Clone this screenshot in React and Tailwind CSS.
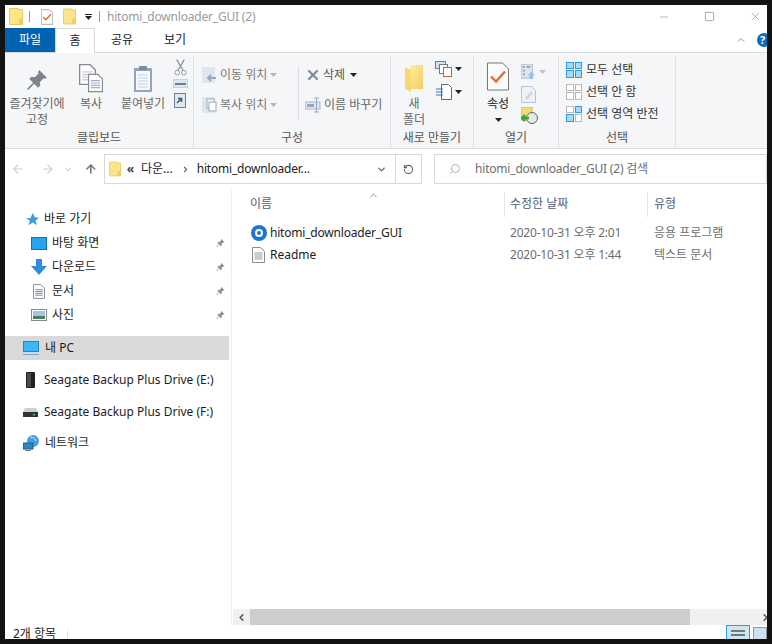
import React from 'react';
import { ArrowLeft, ArrowRight, ArrowUp, ChevronDown, ChevronUp, ChevronLeft, ChevronRight, RotateCw, Search, X, Minus, Square } from 'lucide-react';

const Folder = ({ className = 'w-[14px] h-[17px]' }) => (
  <svg viewBox="0 0 14 17" className={className}>
    <path d="M0.5 0.5h9v1h4v15h-13z" fill="#fde38a" stroke="#e9c95a" />
    <path d="M10 11h3.5v5.5h-3.5z" fill="#f3cf5c" />
  </svg>
);

const Pin = ({ className = 'w-[9px] h-[10px]', color = '#8a9099' }) => (
  <svg viewBox="0 0 20 20" className={className}>
    <path d="M12 1l7 7-2 1-1-.5-3.5 3.5.5 3-2 2-3.5-3.5L2 19l-1-1 5.500-5.500L3 9l2-2 3 .5L11.500 4 11 3z" fill={color} />
  </svg>
);

const Caret = ({ color = '#222' }) => (
  <svg viewBox="0 0 7 4" className="w-[7px] h-[4px] shrink-0"><path d="M0 0h7L3.500 4z" fill={color} /></svg>
);

const CheckDoc = ({ className }) => (
  <svg viewBox="0 0 22 28" className={className}>
    <path d="M.5.5h15l6 6v21H.5z" fill="#fbfbfb" stroke="#777" />
    <path d="M4 14l5 5 9-10" fill="none" stroke="#ea6a2a" strokeWidth="2.400" />
  </svg>
);

const Doc = ({ className, lines = '#8f9bb0' }) => (
  <svg viewBox="0 0 13 16" className={className}>
    <path d="M.5.5h8l4 4v11H.5z" fill="#fff" stroke="#8a8a8a" />
    <path d="M2.500 6h8M2.500 8h8M2.500 10h8M2.500 12h8" stroke={lines} />
  </svg>
);

const GridIcon = ({ cells, stroke }) => (
  <div className="grid grid-cols-2 gap-[1px] w-[16px] h-[16px] shrink-0">
    {cells.map((on, i) => (
      <span key={i} className={on ? 'border border-[#2f9ae0] bg-[#a9d8f8]' : 'border border-[#b9b9b9] bg-white'} />
    ))}
  </div>
);

const Sep = () => <div className="w-px bg-[#dcdde0]" />;

function RibbonGroup({ width, label, children }) {
  return (
    <div className="flex flex-col h-full border-r border-[#dfe0e3] pb-[2px]" style={{ width }}>
      <div className="flex-1 flex min-h-0">{children}</div>
      <div className="text-center text-[#555] leading-[16px] h-[16px]">{label}</div>
    </div>
  );
}

function BigButton({ icon, label, width, className = '' }) {
  return (
    <div className={`flex flex-col items-center shrink-0 ${className}`} style={{ width }}>
      <div className="h-[37px] flex items-end justify-center">{icon}</div>
      <div className="text-center leading-[16px] mt-[3px] text-[#666]">{label}</div>
    </div>
  );
}

const Row = ({ icon, label, pinned }) => (
  <div className="h-[24px] flex items-center pl-[26px] pr-[6px]">
    <div className="w-[16px] h-[16px] flex items-center justify-center shrink-0">{icon}</div>
    <span className="ml-[5px] text-[#1c1c1c] flex-1">{label}</span>
    {pinned && <Pin />}
  </div>
);

const Row2 = ({ icon, label, className = '' }) => (
  <div className={`h-[24px] flex items-center pl-[17px] ${className}`}>
    <div className="w-[17px] h-[16px] flex items-center justify-center shrink-0">{icon}</div>
    <span className="ml-[5px] text-[#1c1c1c] whitespace-nowrap">{label}</span>
  </div>
);

export default function App() {
  return (
    <div
      className="w-[772px] h-[644px] bg-[#131313] pt-[5px] pl-[5px] pr-[5px] pb-[5px] overflow-hidden text-[12px]"
      style={{ fontFamily: '"Noto Sans", "Noto Sans CJK KR", sans-serif' }}
    >
      <div className="w-[762px] h-[634px] bg-white flex flex-col overflow-hidden">
        {/* title bar */}
        <div className="h-[23px] flex items-center shrink-0 relative">
          <div className="ml-[4px]"><Folder /></div>
          <div className="ml-[6px] w-px h-[11px] bg-[#999]" />
          <CheckDoc className="ml-[11px] w-[12px] h-[16px]" />
          <div className="ml-[10px]"><Folder className="w-[13px] h-[17px]" /></div>
          <div className="ml-[9px] flex flex-col items-center gap-[1px]">
            <span className="w-[7px] h-px bg-[#222]" />
            <Caret />
          </div>
          <div className="ml-[7px] w-px h-[11px] bg-[#999]" />
          <span className="ml-[7px] text-[#9a9a9a] tracking-[-0.2px]">hitomi_downloader_GUI (2)</span>
          <div className="ml-auto flex items-center">
            <Minus className="w-[12px] h-[12px] mr-[34px] text-[#777]" strokeWidth={1} />
            <Square className="w-[11px] h-[11px] mr-[34px] text-[#777]" strokeWidth={1.400} />
            <X className="w-[13px] h-[13px] mr-[5px] text-[#777]" strokeWidth={1} />
          </div>
        </div>

        {/* tabs */}
        <div className="h-[25px] flex shrink-0 border-b border-[#dadbdc] relative">
          <div className="w-[50px] h-[24px] bg-[#0063b1] text-white text-center leading-[23px]">파일</div>
          <div className="w-[40px] h-[25px] bg-[#f5f6f7] border-x border-t border-[#dadbdc] text-center leading-[23px] text-[#222] bg-white">홈</div>
          <div className="ml-[15px] w-[24px] text-center leading-[23px] text-[#222]">공유</div>
          <div className="ml-[29px] w-[24px] text-center leading-[23px] text-[#222]">보기</div>
          <div className="ml-auto flex items-center h-[24px]">
            <ChevronUp className="w-[12px] h-[12px] text-[#999] mr-[10px]" />
            <div className="w-[14px] h-[14px] rounded-full bg-[#0a6cc4] text-white text-[11px] font-bold leading-[14px] pl-[3px] -mr-[4px]">?</div>
          </div>
        </div>

        {/* ribbon */}
        <div className="h-[96px] bg-[#f5f6f7] border-b border-[#dadbdc] flex shrink-0 pt-[3px]">
          <RibbonGroup width={189} label="클립보드">
            <BigButton width={62} className="pl-[2px]" label={<>즐겨찾기에<br />고정</>} icon={<Pin className="w-[22px] h-[22px] mb-[2px]" color="#7d838c" />} />
            <BigButton width={40} className="ml-[4px]" label="복사" icon={
              <div className="relative w-[24px] h-[30px]">
                <Doc className="w-[17px] h-[23px]" lines="#c3cfe0" />
                <Doc className="absolute right-0 bottom-0 w-[15px] h-[20px]" lines="#9cb0cc" />
              </div>
            } />
            <BigButton width={56} className="ml-[4px]" label="붙여넣기" icon={
              <svg viewBox="0 0 20 28" className="w-[20px] h-[28px]">
                <rect x="1" y="3" width="18" height="24" rx="1" fill="#8fa5c0" />
                <rect x="3" y="6" width="14" height="19" fill="#f6f8fb" />
                <path d="M5 10h10M5 13h10M5 16h10M5 19h10M5 22h10" stroke="#c6d2e2" />
                <rect x="6" y="1" width="8" height="4" fill="#7e8ea5" />
              </svg>
            } />
            <div className="flex flex-col items-center ml-[1px] w-[16px] pt-[3px] gap-[3px]">
              <svg viewBox="0 0 14 17" className="w-[13px] h-[17px]"><path d="M3 0l7 12M11 0L4 12" stroke="#8a97a8" strokeWidth="1.500" /><circle cx="3.500" cy="14" r="2.500" fill="none" stroke="#8a97a8" /><circle cx="10.500" cy="14" r="2.500" fill="none" stroke="#8a97a8" /></svg>
              <div className="w-[15px] h-[9px] bg-[#dde5f0] border border-[#c6d2e2] flex items-center justify-center"><span className="w-[11px] h-[2px] bg-[#6c7c93]" /></div>
              <svg viewBox="0 0 12 16" className="w-[12px] h-[16px] mt-[1px]"><rect x=".5" y="1.500" width="11" height="14" fill="#dfe7f1" stroke="#6e7f96" /><path d="M3 11l4-4M4 6.500h3.500V10" fill="none" stroke="#44566e" strokeWidth="1.500" /></svg>
            </div>
          </RibbonGroup>

          <RibbonGroup width={197} label="구성">
            <div className="w-[96px] ml-[8px] pt-[8px] flex flex-col gap-[9px] text-[#777]">
              <div className="flex items-center h-[21px] gap-[3px]">
                <svg viewBox="0 0 15 16" className="w-[15px] h-[16px] shrink-0"><rect width="13" height="16" fill="#dfe6ef" /><path d="M14 11H7M9 8l-3 3 3 3" fill="none" stroke="#98a8bc" strokeWidth="2" /></svg>
                <span className="whitespace-nowrap">이동 위치</span>
                <Caret color="#b5b5b5" />
              </div>
              <div className="flex items-center h-[21px] gap-[3px]">
                <svg viewBox="0 0 15 16" className="w-[15px] h-[16px] shrink-0"><rect width="13" height="16" fill="#dfe6ef" /><rect x="5" y="2" width="7" height="9" fill="#fff" stroke="#98a8bc" /><rect x="7" y="5" width="7" height="9" fill="#fff" stroke="#98a8bc" /></svg>
                <span className="whitespace-nowrap">복사 위치</span>
                <Caret color="#b5b5b5" />
              </div>
            </div>
            <div className="w-px h-[55px] bg-[#dcdde0] mt-[10px]" />
            <div className="ml-[6px] pt-[8px] flex flex-col gap-[9px] text-[#666]">
              <div className="flex items-center h-[21px] gap-[2px]">
                <X className="w-[16px] h-[16px] text-[#7f8ea3] shrink-0" strokeWidth={3.500} />
                <span className="whitespace-nowrap text-[#555]">삭제</span>
                <span className="ml-[3px]"><Caret /></span>
              </div>
              <div className="flex items-center h-[21px] gap-[3px]">
                <svg viewBox="0 0 16 16" className="w-[16px] h-[16px] shrink-0"><rect x="0" y="5" width="15" height="7" fill="#dfe6ef" stroke="#a8b5c6" /><rect x="2" y="7" width="7" height="3" fill="#98a8bc" /><path d="M9 1h5M11.500 1v14M9 15h5" stroke="#98a8bc" /></svg>
                <span className="whitespace-nowrap">이름 바꾸기</span>
              </div>
            </div>
          </RibbonGroup>

          <RibbonGroup width={83} label="새로 만들기">
            <BigButton width={42} className="ml-[2px]" label={<>새<br />폴더</>} icon={
              <svg viewBox="0 0 18 28" className="w-[18px] h-[28px] mb-[1px]">
                <defs><linearGradient id="nf" x1="0" y1="0" x2="1" y2="1"><stop offset="0" stopColor="#fdeea8" /><stop offset="1" stopColor="#f4cc5e" /></linearGradient></defs>
                <path d="M5 1h13v24H5z" fill="url(#nf)" />
                <path d="M0 3l6 3v22l-6-3z" fill="#f8d775" />
              </svg>
            } />
            <div className="flex flex-col pt-[5px] gap-[7px]">
              <div className="flex items-center gap-[2px]">
                <svg viewBox="0 0 18 16" className="w-[18px] h-[16px]"><rect x=".5" y=".5" width="10" height="7" fill="#cfe3f5" stroke="#5d86ad" /><rect x="4.500" y="3.500" width="8" height="9" fill="#fff" stroke="#777" /><rect x="8.500" y="6.500" width="8" height="9" fill="#fff" stroke="#c0623a" /></svg>
                <Caret />
              </div>
              <div className="flex items-center gap-[2px]">
                <svg viewBox="0 0 18 16" className="w-[18px] h-[16px]"><path d="M6.500.5h7l3 3v12h-10z" fill="#fff" stroke="#666" /><path d="M1 5h7M1 8h7M1 11h7" stroke="#3a78b8" /></svg>
                <Caret />
              </div>
            </div>
          </RibbonGroup>

          <RibbonGroup width={85} label="열기">
            <BigButton width={46} className="ml-[1px]" label={<div className="flex flex-col items-center text-[#222]">속성<span className="mt-[6px]"><Caret /></span></div>} icon={<CheckDoc className="w-[22px] h-[29px] mb-[2px]" />} />
            <div className="flex flex-col pt-[5px] items-start">
              <div className="flex items-center gap-[3px] h-[21px]">
                <svg viewBox="0 0 16 17" className="w-[15px] h-[16px]"><rect width="12" height="15" fill="#dfe6ef" stroke="#a8b5c6" /><path d="M2 3h2M2 7h2M2 11h2M6 3h4" stroke="#8c9cb1" strokeWidth="2" /><path d="M11 8l4 4h-2v4h-4v-4H7z" fill="#9fc0e2" /></svg>
                <Caret color="#c2c2c2" />
              </div>
              <svg viewBox="0 0 15 17" className="w-[15px] h-[17px] mt-[4px]"><path d="M.5.5h10l4 4v12H.5z" fill="#eef2f7" stroke="#b6c3d4" /><path d="M4 12L10 5l2 2-6 7z" fill="#c9d7e8" /></svg>
              <svg viewBox="0 0 17 17" className="w-[17px] h-[17px] mt-[4px]">
                <rect x="0" y="0" width="11" height="13" fill="#f4dc72" stroke="#d3b64a" />
                <circle cx="11" cy="11" r="5.500" fill="#e8e8e8" stroke="#666" />
                <path d="M1 11h7M4 8l-3 3 3 3" fill="none" stroke="#36a932" strokeWidth="2.400" />
              </svg>
            </div>
          </RibbonGroup>

          <RibbonGroup width={117} label="선택">
            <div className="pl-[7px] pt-[5px] flex flex-col gap-[5px] text-[#333]">
              <div className="flex items-center gap-[4px] h-[17px]">
                <GridIcon cells={[1, 1, 1, 1]} />
                <span className="whitespace-nowrap">모두 선택</span>
              </div>
              <div className="flex items-center gap-[4px] h-[17px]">
                <GridIcon cells={[0, 0, 0, 0]} />
                <span className="whitespace-nowrap">선택 안 함</span>
              </div>
              <div className="flex items-center gap-[4px] h-[17px]">
                <GridIcon cells={[0, 1, 1, 0]} />
                <span className="whitespace-nowrap">선택 영역 반전</span>
              </div>
            </div>
          </RibbonGroup>
        </div>

        {/* address bar */}
        <div className="h-[41px] flex items-center shrink-0 pb-[1px]">
          <ArrowLeft className="ml-[6px] w-[14px] h-[14px] text-[#d0d0d0]" strokeWidth={2.200} />
          <ArrowRight className="ml-[16px] w-[14px] h-[14px] text-[#d0d0d0]" strokeWidth={2.200} />
          <ChevronDown className="ml-[10px] w-[9px] h-[9px] text-[#d0d0d0]" strokeWidth={3} />
          <ArrowUp className="ml-[11px] w-[14px] h-[14px] text-[#777]" strokeWidth={2.800} />
          <div className="ml-[6px] w-[300px] h-[30px] border border-[#d9d9d9] flex items-center">
            <div className="ml-[4px]"><Folder className="w-[12px] h-[16px]" /></div>
            <span className="ml-[6px] text-[#444] font-bold tracking-[-1px]">«</span>
            <span className="ml-[8px] text-[#222]">다운...</span>
            <ChevronRight className="ml-[8px] w-[9px] h-[9px] text-[#666]" strokeWidth={3} />
            <span className="ml-[7px] text-[#222] tracking-[-0.2px] whitespace-nowrap">hitomi_downloader...</span>
            <ChevronDown className="ml-auto mr-[8px] w-[11px] h-[11px] text-[#666]" strokeWidth={3} />
          </div>
          <div className="w-[27px] h-[30px] border border-l-0 border-[#d9d9d9] flex items-center justify-center">
            <RotateCw className="w-[11px] h-[11px] text-[#666] -scale-x-100" strokeWidth={2.500} />
          </div>
          <div className="ml-[12px] w-[342px] h-[30px] border border-[#d9d9d9] flex items-center">
            <Search className="ml-[14px] w-[12px] h-[12px] text-[#999] -scale-x-100" strokeWidth={1.500} />
            <span className="ml-[14px] text-[#6d6d6d] tracking-[-0.2px] whitespace-nowrap">hitomi_downloader_GUI (2) 검색</span>
          </div>
        </div>

        {/* body */}
        <div className="flex-1 flex min-h-0">
          <div className="w-[227px] border-r border-[#eeeeee] pt-[17px] h-[435px] shrink-0">
            <div className="h-[24px] flex items-center pl-[20px]">
              <svg viewBox="0 0 16 16" className="w-[14px] h-[14px] shrink-0"><path d="M9 1l2 5 5 .5-4 3.500 1.500 5L9 12l-5 3 1.500-5L1 7h5z" fill="#3a9be0" /></svg>
              <span className="ml-[5px] text-[#1c1c1c]">바로 가기</span>
            </div>
            <Row label="바탕 화면" pinned icon={<div className="w-[16px] h-[13px] bg-[#29a3ee] border border-[#1c6fa8]" />} />
            <Row label="다운로드" pinned icon={
              <svg viewBox="0 0 16 16" className="w-[16px] h-[16px]"><path d="M5 0h6v7h5l-8 9-8-9h5z" fill="#2f8ce0" /></svg>
            } />
            <Row label="문서" pinned icon={<Doc className="w-[12px] h-[15px]" lines="#3f8fd0" />} />
            <Row label="사진" pinned icon={
              <svg viewBox="0 0 16 12" className="w-[16px] h-[12px]"><rect x=".5" y=".5" width="15" height="11" fill="#fff" stroke="#8a8a8a" /><rect x="2" y="2" width="12" height="5" fill="#9fc6ea" /><rect x="2" y="7" width="12" height="3" fill="#4e7a5e" /></svg>
            } />
            <div className="mt-[9px] h-[24px] w-[224px] bg-[#d9d9d9] flex items-center pl-[18px]">
              <svg viewBox="0 0 16 15" className="w-[16px] h-[15px] shrink-0"><rect x=".5" y=".5" width="15" height="10" fill="#3db6f5" stroke="#1c88c8" /><rect x="0" y="13" width="16" height="1" fill="#7ba6c4" /></svg>
              <span className="ml-[6px] text-[#1c1c1c]">내 PC</span>
            </div>
            <Row2 className="mt-[8px]" label="Seagate Backup Plus Drive (E:)" icon={
              <svg viewBox="0 0 9 16" className="w-[9px] h-[16px]"><rect width="9" height="16" rx="1" fill="#222" /><rect x="1" y="1" width="4" height="14" fill="#4a4a4a" /></svg>
            } />
            <Row2 className="mt-[8px]" label="Seagate Backup Plus Drive (F:)" icon={
              <svg viewBox="0 0 15 9" className="w-[15px] h-[9px]"><path d="M2 0h11l2 4H0z" fill="#cfcfcf" /><rect y="4" width="15" height="5" fill="#333" /><rect x="10" y="6" width="2" height="1.500" fill="#36e04a" /></svg>
            } />
            <div className="mt-[7px] h-[24px] flex items-center pl-[18px]">
              <svg viewBox="0 0 16 16" className="w-[16px] h-[16px] shrink-0"><circle cx="10" cy="6" r="6" fill="#4a9be0" /><path d="M7 2c3 0 5 1 6 4" stroke="#cfe8fa" fill="none" /><rect x="0" y="8" width="10" height="6" fill="#2b86c5" stroke="#15618f" /><rect x="2" y="15" width="6" height="1" fill="#777" /></svg>
              <span className="ml-[6px] text-[#1c1c1c]">네트워크</span>
            </div>
          </div>

          <div className="flex-1 min-w-0 h-[435px] flex flex-col">
            <div className="flex-1 min-h-0 relative">
              <ChevronUp className="absolute left-[136px] top-0 w-[11px] h-[11px] text-[#888]" strokeWidth={2} />
              <div className="h-[26px] flex items-center text-[#4c607a] mt-[1px]">
                <span className="ml-[18px] w-[254px]">이름</span>
                <div className="h-[25px] w-px bg-[#e5e5e5]" />
                <span className="ml-[5px] w-[137px]">수정한 날짜</span>
                <div className="h-[25px] w-px bg-[#e5e5e5]" />
                <span className="ml-[6px]">유형</span>
              </div>
              <div className="h-[22px] mt-[5px] flex items-center">
                <div className="ml-[19px] w-[16px] h-[16px] rounded-full bg-[#1b76d8] flex items-center justify-center shrink-0">
                  <span className="w-[8px] h-[8px] rounded-full border-[2px] border-white" />
                </div>
                <span className="ml-[3px] w-[240px] text-[#1c1c1c] tracking-[-0.2px] whitespace-nowrap">hitomi_downloader_GUI</span>
                <span className="w-[144px] text-[#6d6d6d] whitespace-nowrap tracking-[-0.2px]">2020-10-31 오후 2:01</span>
                <span className="text-[#6d6d6d] whitespace-nowrap">응용 프로그램</span>
              </div>
              <div className="h-[22px] flex items-center">
                <Doc className="ml-[20px] w-[13px] h-[16px] shrink-0" lines="#999" />
                <span className="ml-[5px] w-[240px] text-[#1c1c1c]">Readme</span>
                <span className="w-[144px] text-[#6d6d6d] whitespace-nowrap tracking-[-0.2px]">2020-10-31 오후 1:44</span>
                <span className="text-[#6d6d6d] whitespace-nowrap">텍스트 문서</span>
              </div>
            </div>
            <div className="h-[16px] flex bg-[#f0f0f0] ml-[1px] mb-[0px] shrink-0">
              <div className="w-[17px] flex items-center justify-center"><ChevronLeft className="w-[11px] h-[11px] text-[#555]" strokeWidth={3.500} /></div>
              <div className="w-[440px] bg-[#cdcdcd]" />
              <div className="ml-auto flex items-center"><ChevronRight className="w-[11px] h-[11px] text-[#555] -mr-[4px]" strokeWidth={3.500} /></div>
            </div>
          </div>
        </div>

        {/* status bar */}
        <div className="h-[14px] flex shrink-0 relative overflow-hidden">
          <span className="ml-[8px] mt-[1px] leading-[16px] text-[#222] h-[16px]">2개 항목</span>
          <div className="ml-[11px] mt-[6px] w-px h-[8px] bg-[#e0e0e0]" />
          <div className="ml-auto mr-[3px] w-[24px] h-[20px] border border-[#2f9ae0] bg-[#cce8f6] flex flex-col gap-[2px] p-[4px]">
            <span className="h-[2px] w-full bg-[#777]" />
            <span className="h-[2px] w-full bg-[#777]" />
          </div>
          <div className="w-[14px] h-[20px] border border-[#999] mt-[2px] bg-[#cfe0f0]" />
        </div>
      </div>
    </div>
  );
}
